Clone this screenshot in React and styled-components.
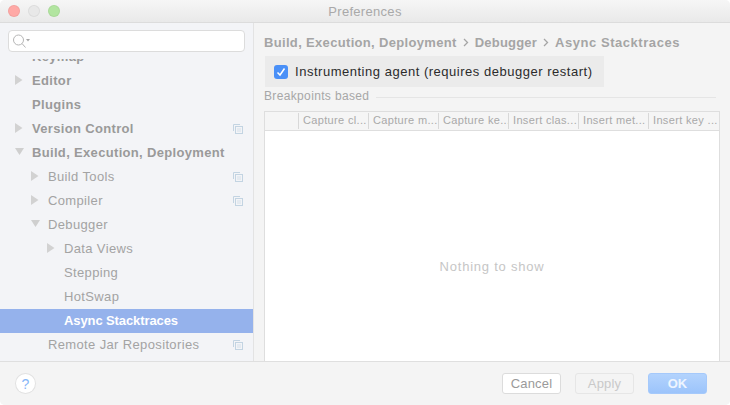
import React from "react";
import styled, { createGlobalStyle } from "styled-components";

const GlobalStyle = createGlobalStyle`
  html, body { margin: 0; padding: 0; background: #fff; }
  body { font-family: "Liberation Sans", Arial, sans-serif; }
`;

const Win = styled.div`
  width: 730px;
  height: 405px;
  display: flex;
  flex-direction: column;
  background: #f4f4f4;
  border-radius: 5px;
  overflow: hidden;
`;

const TitleBar = styled.div`
  height: 22px;
  flex: none;
  display: flex;
  align-items: center;
  position: relative;
  padding-left: 8px;
  gap: 8px;
  background: linear-gradient(#f6f6f6, #e9e9e9);
  border-bottom: 1px solid #dcdcdc;
`;

const Light = styled.span`
  width: 12px;
  height: 12px;
  border-radius: 50%;
  background: ${p => p.$color};
  box-shadow: inset 0 0 0 1px rgba(0, 0, 0, 0.05);
`;

const WinTitle = styled.div`
  position: absolute;
  left: 0;
  right: 0;
  top: 4px;
  text-align: center;
  font-size: 13px;
  line-height: 15px;
  letter-spacing: 0.3px;
  color: #a9a9a9;
`;

const Body = styled.div`
  flex: 1;
  min-height: 0;
  display: flex;
`;

const Side = styled.div`
  width: 253px;
  flex: none;
  display: flex;
  flex-direction: column;
  background: #f3f4f7;
  border-right: 1px solid #e3e3e3;
`;

const SearchWrap = styled.div`
  flex: none;
  padding: 7px 8px 7px;
  height: 22px;
`;

const Search = styled.div`
  height: 20px;
  background: #fff;
  border: 1px solid #dcdcdc;
  border-radius: 4px;
  display: flex;
  align-items: center;
  padding-left: 4px;
`;

const TreeClip = styled.div`
  flex: 1;
  min-height: 0;
  overflow: hidden;
`;

/* list is scrolled a little, only the bottom of the first row shows */
const Tree = styled.div`
  margin-top: -14px;
`;

const Row = styled.div`
  height: 24px;
  box-sizing: border-box;
  padding-bottom: 2px;
  display: flex;
  align-items: center;
  position: relative;
  padding-left: ${p => 32 + p.$level * 16}px;
  font-size: 13px;
  font-weight: ${p => (p.$bold || p.$selected ? 700 : 400)};
  letter-spacing: ${p => (p.$selected ? -0.1 : p.$bold ? 0.33 : 0.36)}px;
  color: ${p => (p.$selected ? "#fff" : p.$bold ? "#9a9a9a" : "#a3a3a3")};
  background: ${p => (p.$selected ? "#95b2ec" : "transparent")};
`;

const Arrow = styled.svg`
  position: absolute;
  left: ${p => 15 + p.$level * 16}px;
  top: 6px;
`;

const CopyIcon = styled.svg`
  position: absolute;
  right: 10px;
  top: 7px;
`;

const Main = styled.div`
  flex: 1;
  min-width: 0;
  display: flex;
  flex-direction: column;
  padding: 0 10px;
`;

const Crumbs = styled.div`
  height: 28px;
  padding-top: 5px;
  flex: none;
  display: flex;
  align-items: center;
  gap: 6px;
  font-size: 13px;
  font-weight: 700;
  color: #a5a5a5;
`;

const CrumbText = styled.span`
  letter-spacing: ${p => p.$spacing}px;
`;

const CrumbSep = styled.svg`
  flex: none;
`;

const AgentRow = styled.div`
  width: 339px;
  height: 31px;
  margin-left: 1px;
  flex: none;
  display: flex;
  align-items: center;
  gap: 7px;
  padding-left: 9px;
  box-sizing: border-box;
  background: #ebebeb;
  font-size: 13px;
  letter-spacing: 0.52px;
  color: #2b2b2b;
`;

const Check = styled.span`
  width: 14px;
  height: 14px;
  border-radius: 3px;
  background: #4a90f7;
  display: flex;
  align-items: center;
  justify-content: center;
`;

const GroupLabel = styled.div`
  flex: none;
  height: 17px;
  display: flex;
  align-items: center;
  gap: 7px;
  font-size: 12px;
  letter-spacing: 0.35px;
  color: #a7a7a7;
  margin-right: 4px;

  &::after {
    content: "";
    flex: 1;
    height: 1px;
    margin-top: 4px;
    background: #e5e5e5;
  }
`;

const TableBox = styled.div`
  flex: 1;
  min-height: 0;
  margin-top: 7px;
  display: flex;
  flex-direction: column;
  background: #fff;
  border: 1px solid #dedede;
  border-bottom: none;
`;

const Head = styled.div`
  height: 18px;
  flex: none;
  display: flex;
  background: #f5f5f5;
  border-bottom: 1px solid #dedede;
`;

const HeadCell = styled.div`
  width: ${p => p.$w}px;
  flex: none;
  box-sizing: border-box;
  border-right: ${p => (p.$last ? "none" : "1px solid #d8d8d8")};
  margin: 1px 0;
  padding-left: 4px;
  font-size: 11px;
  line-height: 15px;
  letter-spacing: 0.34px;
  color: #a9a9a9;
  white-space: nowrap;
  overflow: hidden;
`;

const Empty = styled.div`
  flex: 1;
  display: flex;
  align-items: center;
  justify-content: center;
  padding-top: 40px;
  font-size: 13px;
  letter-spacing: 0.77px;
  color: #c6c6c6;
`;

const Footer = styled.div`
  height: 43px;
  flex: none;
  display: flex;
  align-items: center;
  padding: 0 23px 0 16px;
  background: #f4f4f4;
  border-top: 1px solid #dfdfdf;
`;

const Help = styled.div`
  width: 19px;
  height: 19px;
  border-radius: 50%;
  background: #fff;
  box-shadow: 0 0 0 1px #e2e2e2;
  display: flex;
  align-items: center;
  justify-content: center;
  font-size: 14px;
  color: #86b6f8;
`;

const Spacer = styled.div`
  flex: 1;
`;

const Btn = styled.div`
  width: 59px;
  height: 21px;
  box-sizing: border-box;
  margin-left: ${p => p.$gap}px;
  border-radius: 3px;
  display: flex;
  align-items: center;
  justify-content: center;
  font-size: 13px;
  letter-spacing: ${p => (p.$primary ? 0 : 0.15)}px;
  border: 1px solid ${p => (p.$primary ? "#a5c9fb" : p.$disabled ? "#e6e6e6" : "#dcdcdc")};
  background: ${p =>
    p.$primary ? "linear-gradient(#b3d3fd, #9cc4fb)" : p.$disabled ? "#f4f4f4" : "#fff"};
  color: ${p => (p.$primary ? "#eef5ff" : p.$disabled ? "#c9c9c9" : "#9a9a9a")};
  font-weight: ${p => (p.$primary ? 700 : 400)};
`;

const treeItems = [
  { label: "Keymap", level: 0, bold: true },
  { label: "Editor", level: 0, bold: true, arrow: "right" },
  { label: "Plugins", level: 0, bold: true },
  { label: "Version Control", level: 0, bold: true, arrow: "right", copy: true },
  { label: "Build, Execution, Deployment", level: 0, bold: true, arrow: "down" },
  { label: "Build Tools", level: 1, arrow: "right", copy: true },
  { label: "Compiler", level: 1, arrow: "right", copy: true },
  { label: "Debugger", level: 1, arrow: "down" },
  { label: "Data Views", level: 2, arrow: "right" },
  { label: "Stepping", level: 2 },
  { label: "HotSwap", level: 2 },
  { label: "Async Stacktraces", level: 2, selected: true },
  { label: "Remote Jar Repositories", level: 1, copy: true },
];

const columns = [
  { w: 34, label: "" },
  { w: 70, label: "Capture cl..." },
  { w: 70, label: "Capture m..." },
  { w: 70, label: "Capture ke..." },
  { w: 70, label: "Insert clas..." },
  { w: 70, label: "Insert met..." },
  { w: 70, label: "Insert key ...", last: true },
];

const crumbs = [
  { label: "Build, Execution, Deployment", spacing: 0.33 },
  { label: "Debugger", spacing: 0.2 },
  { label: "Async Stacktraces", spacing: 0.55 },
];

const App = () => {
  return (
    <Win>
      <GlobalStyle />
      <TitleBar>
        <Light $color="#ffa9a6" />
        <Light $color="#e8e8e8" />
        <Light $color="#b2e5a0" />
        <WinTitle>Preferences</WinTitle>
      </TitleBar>
      <Body>
        <Side>
          <SearchWrap>
            <Search>
              <svg width="22" height="15" viewBox="0 0 22 15" fill="none">
                <circle cx="5.5" cy="6" r="5" stroke="#b5b5b5" />
                <path d="M9 9.5l3.5 4" stroke="#b5b5b5" />
                <path d="M13 5h4l-2 2.5z" fill="#a8a8a8" />
              </svg>
            </Search>
          </SearchWrap>
          <TreeClip>
            <Tree>
              {treeItems.map(item => (
                <Row key={item.label} $level={item.level} $bold={item.bold} $selected={item.selected}>
                  {item.arrow === "right" && (
                    <Arrow $level={item.level} width="9" height="10" viewBox="0 0 9 10">
                      <path d="M0 0l7.5 5-7.5 5z" fill="#d2d2d2" />
                    </Arrow>
                  )}
                  {item.arrow === "down" && (
                    <Arrow $level={item.level} width="10" height="10" viewBox="0 0 10 10">
                      <path d="M0 1h9l-4.5 7z" fill="#cfcfcf" />
                    </Arrow>
                  )}
                  {item.label}
                  {item.copy && (
                    <CopyIcon width="10" height="10" viewBox="0 0 10 10" fill="none">
                      <path d="M.5 7V.5H7" stroke="#c3d4e2" />
                      <rect x="2.5" y="2.5" width="7" height="7" stroke="#c3d4e2" />
                      <path d="M4 5h4M4 7h4" stroke="#d5e0ea" />
                    </CopyIcon>
                  )}
                </Row>
              ))}
            </Tree>
          </TreeClip>
        </Side>
        <Main>
          <Crumbs>
            {crumbs.map((c, i) => (
              <React.Fragment key={c.label}>
                {i > 0 && (
                  <CrumbSep width="6" height="9" viewBox="0 0 6 9" fill="none">
                    <path d="M1 1l3.5 3.5L1 8" stroke="#a5a5a5" strokeWidth="1.3" />
                  </CrumbSep>
                )}
                <CrumbText $spacing={c.spacing}>{c.label}</CrumbText>
              </React.Fragment>
            ))}
          </Crumbs>
          <AgentRow>
            <Check>
              <svg width="10" height="10" viewBox="0 0 10 10" fill="none">
                <path d="M1.5 5.5l2.5 2.5 4.5-6.5" stroke="#fff" strokeWidth="1.5" />
              </svg>
            </Check>
            Instrumenting agent (requires debugger restart)
          </AgentRow>
          <GroupLabel>Breakpoints based</GroupLabel>
          <TableBox>
            <Head>
              {columns.map((col, i) => (
                <HeadCell key={i} $w={col.w} $last={col.last}>
                  {col.label}
                </HeadCell>
              ))}
            </Head>
            <Empty>Nothing to show</Empty>
          </TableBox>
        </Main>
      </Body>
      <Footer>
        <Help>?</Help>
        <Spacer />
        <Btn $gap={0}>Cancel</Btn>
        <Btn $gap={14} $disabled>Apply</Btn>
        <Btn $gap={14} $primary>OK</Btn>
      </Footer>
    </Win>
  );
};

export default App;
